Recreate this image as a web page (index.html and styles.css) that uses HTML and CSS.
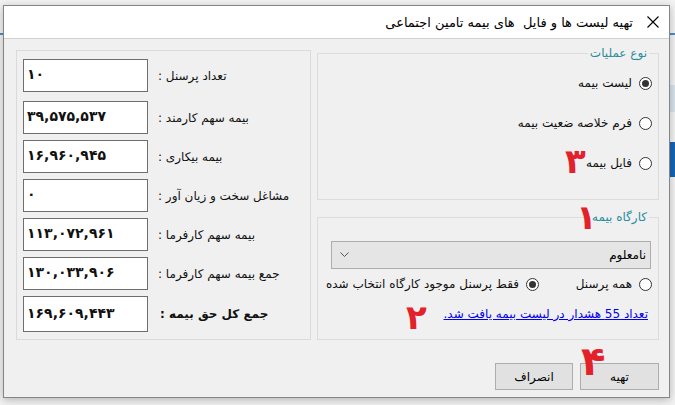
FILE: index.html
```html
<!DOCTYPE html>
<html lang="fa">
<head>
    <meta charset="UTF-8">
    <meta name="viewport" content="width=device-width, initial-scale=1.0">
    <title>تهیه لیست ها و فایل های بیمه تامین اجتماعی</title>
    <link rel="stylesheet" href="styles.css">
</head>
<body>
    <div class="dialog">
        <!-- Title bar -->
        <div class="titlebar">
            <svg class="close" width="12" height="12" viewBox="0 0 12 12">
                <path d="M0.5 0.5 L11.5 11.5 M11.5 0.5 L0.5 11.5" stroke="#000" stroke-width="1.1" fill="none"/>
            </svg>
            <span class="title">تهیه لیست ها و فایل&nbsp; های بیمه تامین اجتماعی</span>
        </div>

        <div class="content">
            <div class="panels">
                <!-- Totals -->
                <div class="totals">
                    <div class="row first"><div class="box">۱۰</div><span class="label">تعداد پرسنل :</span></div>
                    <div class="row"><div class="box">۳۹,۵۷۵,۵۳۷</div><span class="label">بیمه سهم کارمند :</span></div>
                    <div class="row"><div class="box">۱۶,۹۶۰,۹۴۵</div><span class="label">بیمه بیکاری :</span></div>
                    <div class="row"><div class="box">۰</div><span class="label">مشاغل سخت و زیان آور :</span></div>
                    <div class="row"><div class="box">۱۱۳,۰۷۲,۹۶۱</div><span class="label">بیمه سهم کارفرما :</span></div>
                    <div class="row"><div class="box">۱۳۰,۰۳۳,۹۰۶</div><span class="label">جمع بیمه سهم کارفرما :</span></div>
                    <div class="row last"><div class="box">۱۶۹,۶۰۹,۴۴۳</div><span class="label bold">جمع کل حق بیمه :</span></div>
                </div>

                <div class="side" dir="rtl">
                    <!-- Operation type -->
                    <fieldset class="group ops">
                        <legend>نوع عملیات</legend>
                        <div class="opt"><span class="radio checked"></span>لیست بیمه</div>
                        <div class="opt"><span class="radio"></span>فرم خلاصه ضعیت بیمه</div>
                        <div class="opt"><span class="radio"></span>فایل بیمه</div>
                    </fieldset>

                    <!-- Workshop -->
                    <fieldset class="group workshop">
                        <legend>کارگاه بیمه</legend>
                        <div class="combo">
                            <span>نامعلوم</span>
                            <svg width="9" height="6" viewBox="0 0 9 6">
                                <path d="M0.5 0.5 L4.5 4.5 L8.5 0.5" stroke="#555" stroke-width="1" fill="none"/>
                            </svg>
                        </div>
                        <div class="opt-row">
                            <div class="opt all"><span class="radio"></span>همه پرسنل</div>
                            <div class="opt narrow"><span class="radio checked"></span>فقط پرسنل موجود کارگاه انتخاب شده</div>
                        </div>
                        <a class="warn" href="#">تعداد 55 هشدار در لیست بیمه یافت شد.</a>
                    </fieldset>
                </div>
            </div>

            <div class="buttons" dir="rtl">
                <button>تهیه</button>
                <button>انصراف</button>
            </div>
        </div>

        <!-- Red step numbers drawn over the form -->
        <span class="step s1">۱</span>
        <span class="step s2">۲</span>
        <span class="step s3">۳</span>
        <span class="step s4">۴</span>
    </div>
</body>
</html>
```

FILE: styles.css
```css
/* Desktop behind the dialog */
body {
    margin: 0;
    height: 405px;
    overflow: hidden;
    font-family: "DejaVu Sans", sans-serif;
    background:
        linear-gradient(#1565b5, #1565b5) right 0 top 142px / 6px 35px no-repeat,
        linear-gradient(#d8e2ec, #d8e2ec) right 0 top 85px / 6px 27px no-repeat,
        linear-gradient(#4a8fc4, #4a8fc4) 0 33px / 100% 2px no-repeat,
        #f2f2f2;
}

/* Dialog window */
.dialog {
    position: relative;
    box-sizing: border-box;
    width: 667px;
    height: 393px;
    margin: 5px 0 0 3px;
    border: 1px solid #858585;
    background-color: #f0f0f0;
    box-shadow: 0 2px 8px rgba(0,0,0,0.25);
}

.titlebar {
    display: flex;
    flex-direction: row-reverse;
    align-items: center;
    height: 32px;
    background-color: #fff;
    border-bottom: 1px solid #d0d0d0;
    direction: ltr;
}

.close {
    margin: 0 10px 0 10px;
}

.title {
    direction: rtl;
    font-size: 13px;
    color: #000;
    margin-right: 4px;
}

.content {
    padding: 7px 10px 0 12px;
}

.panels {
    display: flex;
    gap: 6px;
    align-items: flex-start;
}

/* Totals panel */
.totals {
    box-sizing: border-box;
    width: 295px;
    height: 290px;
    margin-top: 4px;
    padding: 8px 0 0 6px;
    border: 1px solid #dadada;
    display: flex;
    flex-direction: column;
    gap: 6px;
}

.row {
    display: flex;
    align-items: center;
}

.row.first {
    margin-bottom: 3px;
}

.box {
    box-sizing: border-box;
    width: 125px;
    height: 33px;
    padding: 0 0 3px 3px;
    border: 1px solid #6e6e6e;
    background-color: #fff;
    font-weight: bold;
    font-size: 14px;
    line-height: 29px;
    color: #111;
    direction: ltr;
}

.row.last .box {
    height: 36px;
    line-height: 32px;
}

.label {
    direction: rtl;
    margin-left: 10px;
    font-size: 12px;
    color: #111;
}

.label.bold {
    font-weight: bold;
    margin-left: 12px;
}

/* Right side group boxes */
.side {
    width: 342px;
}

.group {
    box-sizing: border-box;
    margin: 0;
    padding: 0 6px 0 8px;
    border: 1px solid #dcdcdc;
    min-width: 0;
}

.group legend {
    margin-right: 3px;
    padding: 0 2px;
    font-size: 12px;
    line-height: 14px;
    color: #2a8c9e;
}

.ops {
    height: 154px;
    padding-top: 13px;
}

.workshop {
    height: 130px;
    margin-top: 10px;
    padding-top: 17px;
}

.opt {
    display: flex;
    align-items: center;
    height: 20px;
    font-size: 12px;
    color: #111;
    white-space: nowrap;
}

.opt.narrow {
    letter-spacing: -0.3px;
}

.ops .opt + .opt {
    margin-top: 20px;
}

.radio {
    box-sizing: border-box;
    width: 13px;
    height: 13px;
    margin-left: 7px;
    border: 1px solid #333;
    border-radius: 50%;
    background-color: #fff;
    display: flex;
    align-items: center;
    justify-content: center;
}

.radio.checked::after {
    content: "";
    width: 7px;
    height: 7px;
    border-radius: 50%;
    background-color: #333;
}

.combo {
    box-sizing: border-box;
    height: 28px;
    margin: 0 1px 0 5px;
    padding: 0 4px 0 8px;
    border: 1px solid #adadad;
    background-color: #e5e5e5;
    display: flex;
    align-items: center;
    justify-content: space-between;
    font-size: 12px;
    color: #000;
}

.opt-row {
    display: flex;
    margin-top: 5px;
}

.opt.all {
    width: 119px;
}

.warn {
    display: block;
    margin: 10px 4px 0 0;
    line-height: 20px;
    font-size: 12px;
    color: #0000ee;
}

/* Bottom buttons */
.buttons {
    display: flex;
    gap: 7px;
    margin-top: 23px;
}

.buttons button {
    box-sizing: border-box;
    width: 78px;
    height: 27px;
    padding: 0;
    border: 1px solid #adadad;
    background-color: #e1e1e1;
    font-family: "DejaVu Sans", sans-serif;
    font-size: 12px;
    color: #000;
}

.buttons button:first-child {
    width: 79px;
}

/* Red hand-drawn numbers */
.step {
    position: absolute;
    font-size: 34px;
    font-weight: bold;
    line-height: 34px;
    color: #e3212b;
}

.s1 { left: 572px; top: 194px; }
.s2 { left: 402px; top: 294px; }
.s3 { left: 561px; top: 138px; }
.s4 { left: 577px; top: 335px; font-size: 40px; line-height: 40px; }
```
